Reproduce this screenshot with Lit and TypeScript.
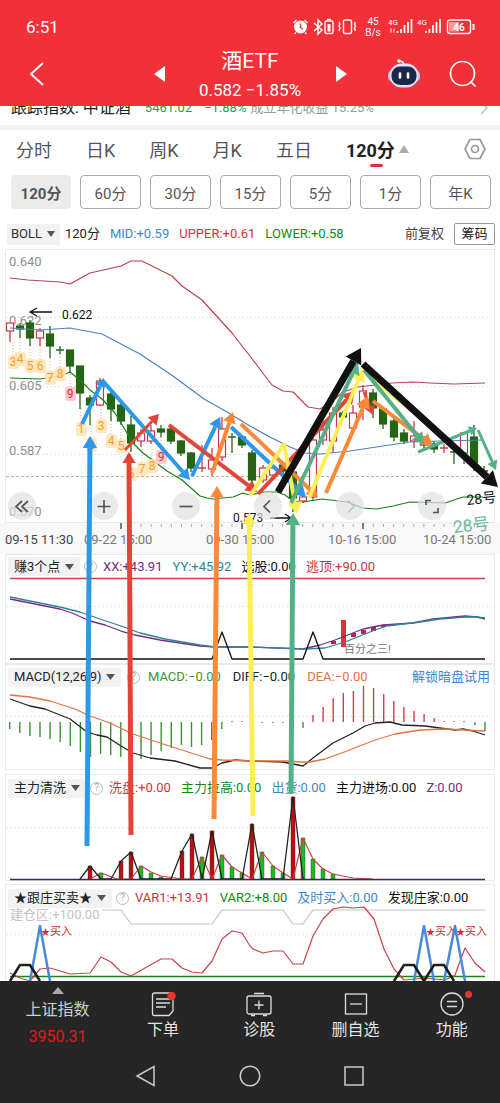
import { LitElement, html, svg, css } from "lit";
import { customElement } from "lit/decorators.js";

type P = [number, number];

/* x, high, low, body top, body bottom, rising */
const CANDLES: [number, number, number, number, number, number][] = [
  [10, 323, 342, 323, 331, 1], [20, 323, 338, 326, 329, 0], [30, 320, 346, 323, 338, 0],
  [40, 328, 346, 331, 338, 1], [50, 326, 358, 334, 346, 0], [60, 346, 354, 350, 350, 0],
  [70, 350, 373, 350, 366, 0], [80, 366, 409, 366, 393, 0], [90, 395, 425, 398, 405, 0],
  [100, 378, 406, 381, 405, 1], [111, 392, 421, 394, 409, 0], [121, 400, 425, 405, 421, 0],
  [131, 416, 452, 425, 443, 0], [141, 429, 447, 433, 441, 1], [151, 425, 444, 431, 441, 1],
  [161, 425, 437, 429, 432, 0], [171, 425, 444, 429, 441, 0], [181, 440, 456, 441, 453, 0],
  [191, 452, 472, 453, 468, 0], [202, 445, 472, 468, 468, 1], [212, 448, 476, 460, 469, 1],
  [222, 417, 461, 429, 457, 1], [232, 433, 453, 437, 437, 0], [242, 435, 448, 437, 445, 0],
  [252, 450, 484, 453, 480, 0], [263, 465, 483, 468, 480, 1], [273, 466, 477, 468, 475, 1],
  [283, 463, 474, 465, 471, 0], [293, 470, 512, 472, 498, 0], [303, 493, 503, 497, 501, 1],
  [313, 436, 500, 440, 497, 1], [323, 420, 445, 430, 440, 1], [333, 407, 452, 413, 441, 1],
  [343, 411, 418, 413, 417, 0], [353, 405, 430, 413, 428, 1], [363, 385, 420, 391, 407, 1],
  [373, 389, 418, 393, 408, 0], [383, 407, 429, 409, 424, 0], [394, 417, 441, 421, 437, 0],
  [404, 429, 444, 433, 441, 0], [414, 421, 448, 436, 441, 1], [424, 436, 449, 440, 445, 0],
  [434, 441, 453, 444, 449, 0], [444, 444, 453, 448, 448, 1], [454, 447, 464, 452, 452, 0],
  [464, 432, 464, 433, 453, 1], [474, 425, 471, 437, 463, 0], [484, 466, 474, 471, 471, 0],
];

/* sequence count badges under the candles */
const COUNTS: [number, number, string][] = [
  [13, 362, "3"], [20, 359, "4"], [30, 366, "5"], [40, 366, "6"], [50, 378, "7"], [60, 374, "8"],
  [70, 394, "9"], [81, 429, "1"], [91, 445, "2"], [101, 426, "3"], [111, 441, "4"], [121, 446, "5"],
  [131, 474, "6"], [142, 469, "7"], [152, 466, "8"], [161, 457, "9"],
];

const UPPER = "10,278 28,280 60,282 70,284 90,273 112,268 121,266 131,261 142,261 172,276 182,286 202,300 232,333 242,346 250,356 262,372 272,385 283,391 293,392 302,401 308,407 320,409 330,403 343,392 358,387 392,383 413,382 430,383 454,384 485,383";
const MID = "10,328 40,330 70,328 102,334 140,354 173,376 204,399 227,412 250,426 270,437 290,447 305,453 320,454 350,451 383,446 410,442 440,441 483,440";
const LOWER = "10,378 40,379 60,376 70,372 80,380 90,390 102,399 115,413 133,443 143,453 167,471 182,480 200,496 207,498 213,499 233,497 243,493 250,495 263,492 277,492 285,495 293,501 303,502 322,499 347,502 363,508 377,509 393,506 410,502 445,503 463,497 483,497";

const MACD_DOWN = [729, 733, 736, 737, 739, 742, 746, 752, 757, 754, 755, 757, 758, 759, 755, 751, 748, 745, 747, 745, 740, 729];
const MACD_UP = [715, 707, 698, 693, 691, 686, 688, 694, 701, 707, 711, 714, 718, 721];

const WASH_RED: P[] = [[90, 866], [121, 861], [131, 852], [182, 851], [192, 834], [212, 831], [252, 824], [293, 797]];
const WASH_GREEN: P[] = [[101, 873], [141, 866], [151, 873], [161, 877], [202, 857], [222, 855], [232, 867], [242, 873], [262, 852], [273, 866], [283, 873], [303, 838], [313, 859], [323, 869], [333, 874]];

/* hand-drawn arrows: x1, y1, x2, y2, colour, shaft width, head length */
const BLUE = "#2c98e8", RED = "#e24538", ORANGE = "#fb8937", YELLOW = "#fbef55", GREEN = "#54b086", INK = "#111";
const ARROWS: [number, number, number, number, string, number, number][] = [
  [82, 424, 104, 378, BLUE, 4, 9], [102, 380, 190, 480, BLUE, 4, 11], [192, 476, 220, 417, BLUE, 4, 11], [231, 427, 306, 497, BLUE, 4, 12],
  [125, 450, 159, 414, RED, 3, 10], [169, 425, 257, 492, RED, 4, 11], [258, 494, 355, 391, RED, 4, 12], [364, 392, 373, 415, RED, 3, 9],
  [212, 473, 233, 412, ORANGE, 4, 11], [241, 424, 318, 497, ORANGE, 4, 11], [326, 493, 368, 396, ORANGE, 4, 12], [373, 401, 433, 446, ORANGE, 4, 12],
  [250, 496, 285, 443, YELLOW, 4, 6], [284, 443, 297, 514, YELLOW, 4, 12], [309, 498, 363, 369, YELLOW, 4, 12], [366, 374, 444, 436, YELLOW, 4, 1],
  [291, 503, 358, 362, GREEN, 4, 12], [364, 370, 424, 444, GREEN, 4, 11], [418, 452, 477, 428, GREEN, 3, 8], [478, 430, 496, 470, GREEN, 3, 9],
  [278, 492, 361, 348, INK, 7, 15], [363, 364, 498, 487, INK, 7, 15],
  [87, 846, 90, 436, BLUE, 5, 12], [131, 835, 129, 452, RED, 5, 11], [214, 819, 217, 486, ORANGE, 5, 11],
  [253, 816, 249, 513, YELLOW, 5, 11], [291, 794, 293, 513, GREEN, 5, 12],
];

const arrow = ([x1, y1, x2, y2, c, w, h]: (typeof ARROWS)[number]) => {
  const d = Math.hypot(x2 - x1, y2 - y1);
  const ux = (x2 - x1) / d, uy = (y2 - y1) / d;
  const bx = x2 - ux * h, by = y2 - uy * h;
  const r = h < 3 ? w / 2 : h * 0.6;
  return svg`<g fill=${c} stroke=${c}>
    <line x1=${x1} y1=${y1} x2=${bx} y2=${by} stroke-width=${w}></line>
    <polygon stroke="none" points=${`${x2},${y2} ${bx - uy * r},${by + ux * r} ${bx + uy * r},${by - ux * r}`}></polygon>
  </g>`;
};

const line = (points: string, stroke: string, width = 1) =>
  svg`<polyline points=${points} fill="none" stroke=${stroke} stroke-width=${width} stroke-linejoin="round"></polyline>`;
const dash = (y: number) =>
  svg`<line x1="6" x2="494" y1=${y + 0.5} y2=${y + 0.5} stroke="#e6e6e6" stroke-dasharray="2 2"></line>`;

const candle = ([x, hi, lo, top, bot, up]: (typeof CANDLES)[number]) => {
  const c = up ? "#c8384a" : "#266416";
  if (top === bot)
    return svg`<path d=${`M${x} ${hi}V${lo}M${x - 4} ${top}h8`} stroke=${c} stroke-width="1.3" fill="none"></path>`;
  return svg`<path d=${`M${x} ${hi}V${top}M${x} ${bot}V${lo}`} stroke=${c} stroke-width="1.3"></path>
    <rect x=${x - 3.5} y=${top} width="7" height=${bot - top} fill=${up ? "#fff" : c} stroke=${c} stroke-width="1.2"></rect>`;
};

@customElement("study-panel")
export class StudyPanel extends LitElement {
  static properties = { name: {}, items: { attribute: false }, link: {} };
  declare name: string;
  declare items: [string, string][];
  declare link?: string;
  static styles = css`
    :host { display: block; margin: 0 5px; border: 1px solid #e9e9e9; background: #fff; }
    .head { display: flex; align-items: center; height: var(--head, 23px); padding: 0 4px 0 2px; font-size: 13px; line-height: 18px; white-space: nowrap; gap: var(--gap, 10px); }
    .chip { display: flex; align-items: center; gap: 4px; height: 19px; padding: 0 6px; background: #f2f2f2; border-radius: 2px; margin-right: -6px; }
    select { appearance: none; border: 0; padding: 0; margin: 0; background: none; font: inherit; color: #222; }
    .help { display: grid; place-items: center; width: 13px; height: 13px; box-sizing: border-box; border: 1px solid #bbb; border-radius: 50%; background: none; padding: 0; font: 10px/1 Roboto, sans-serif; color: #aaa; margin-right: -4px; }
    a { margin-left: auto; color: #3f86cc; text-decoration: none; }
  `;
  render() {
    return html`<div class="head">
        <span class="chip">
          <select aria-label="指标"><option>${this.name}</option></select>
          <svg width="9" height="6" viewBox="0 0 9 6" aria-hidden="true"><path d="M0 0h9L4.500 6z" fill="#555"></path></svg>
        </span>
        <button class="help" aria-label="说明">?</button>
        ${this.items.map(([t, c]) => html`<span style="color:${c}">${t}</span>`)}
        ${this.link ? html`<a href="#">${this.link}</a>` : ""}
      </div><slot></slot>`;
  }
}

@customElement("app-root")
export class AppRoot extends LitElement {
  static styles = css`
    :host { display: block; background: #fff; font-family: Roboto, "Noto Sans CJK SC", sans-serif; color: #222; overflow: hidden; }
    * { box-sizing: border-box; }
    button { font: inherit; color: inherit; background: none; border: 0; padding: 0; margin: 0; }
    svg { display: block; }
    header { background: #f23038; color: #fff; height: 106px; }
    .status { display: flex; justify-content: space-between; align-items: center; height: 52px; padding: 2px 24px 0 26px; font-size: 17px; }
    .bar { display: grid; grid-template-columns: 1fr auto 1fr; align-items: center; height: 54px; }
    .side { display: flex; align-items: center; justify-content: space-between; height: 54px; padding-bottom: 18px; }
    .side.left { padding-left: 29px; padding-right: 34px; }
    .side.right { padding-left: 35px; padding-right: 23px; }
    .tools { display: flex; align-items: center; gap: 29px; }
    .side > button, .tools { margin-top: 7px; }
    .name { text-align: center; height: 54px; }
    h1 { margin: -3px 0 0; font-size: 21px; line-height: 24px; font-weight: 400; }
    .quote { font-size: 17px; line-height: 20px; margin-top: 7px; white-space: nowrap; }
    .index { display: flex; align-items: center; height: 19px; overflow: hidden; padding: 0 12px 0 11px; white-space: nowrap; font-size: 13px; line-height: 18px; }
    .index > * { margin-top: -15px; }
    .index b { font-weight: 400; font-size: 16px; margin-right: 14px; }
    .index .g { color: #1f9d4d; margin-right: 12px; }
    .index .g + .g { margin-right: 4px; }
    .index .m { color: #999; }
    .index svg { margin-left: auto; }
    .tabs { display: flex; align-items: center; gap: 34px; height: 45px; border-top: 5px solid #f4f4f4; padding: 0 14px 3px 16px; font-size: 18px; color: #555; white-space: nowrap; margin-bottom: 5px; }
    .tabs .on { position: relative; display: flex; align-items: center; gap: 4px; font-weight: 700; color: #222; }
    .tabs .on::after { content: ""; position: absolute; left: 24px; bottom: -5px; width: 13px; height: 3px; border-radius: 2px; background: #d8323c; }
    .tabs .gear { margin-left: auto; }
    .periods { display: flex; gap: 9px; padding-left: 11px; overflow: hidden; }
    .periods button { flex: none; width: 61px; height: 34px; border: 1px solid #aaa; border-radius: 4px; font-size: 15px; color: #555; }
    .periods .on { width: 60px; background: #ebebeb; border-color: #ebebeb; font-weight: 700; }
    .boll { display: flex; align-items: center; gap: 10px; height: 40px; padding: 10px 5px 0 7px; font-size: 13px; line-height: 18px; white-space: nowrap; }
    .chip { display: flex; align-items: center; gap: 4px; height: 21px; padding: 0 5px 0 4px; background: #f2f2f2; border-radius: 2px; margin-right: -5px; }
    select { appearance: none; border: 0; padding: 0; margin: 0; background: none; font: inherit; color: #333; }
    .mid { color: #3f86cc; } .up { color: #d0333d; } .low { color: #128a12; }
    .adj { margin-left: auto; color: #444; }
    .chips { width: 41px; height: 22px; border: 1px solid #999; border-radius: 2px; }
    .stage { position: relative; }
    .price { position: relative; margin: 0 5px; border: 1px solid #e9e9e9; }
    .plot { width: 100%; height: auto; overflow: visible; }
    .axis { padding: 0 5px; background: #f8f8f8; }
    .ctl { position: absolute; left: 0; right: 0; bottom: 2px; display: flex; justify-content: space-between; padding: 0 48px 0 2px; }
    .ctl button { width: 28px; height: 28px; border-radius: 50%; background: rgba(225, 225, 225, 0.7); display: grid; place-items: center; }
    .ink { position: absolute; left: 0; top: 0; width: 100%; height: auto; pointer-events: none; }
    .tall { --head: 24px; --gap: 12px; }
    .low4 { --head: 26px; margin-top: 4px; }
    .low5 { --head: 26px; margin-top: 3px; border-bottom: 0; }
    footer { position: relative; background: #262626; color: #ddd; height: 122px; }
    .acts { display: grid; grid-template-columns: 115px repeat(4, 1fr); font-size: 16px; line-height: 18px; }
    .acts button { display: flex; flex-direction: column; align-items: center; padding-top: 10px; gap: 4px; color: #e4e4e4; height: 68px; justify-content: flex-start; }
    .acts svg { overflow: visible; }
    .acts .sh { gap: 0; padding-top: 6px; color: #ccc; }
    .sh span { margin-top: 7px; }
    .sh .v { color: #e01b1b; margin-top: 9px; }
    .nav { display: flex; justify-content: center; gap: 82px; padding-top: 16px; }
    text { font-family: Roboto, "Noto Sans CJK SC", sans-serif; }
  `;

  status() {
    return svg`<svg width="184" height="24" viewBox="292 15 184 24" fill="none" stroke="#fff" stroke-width="1.4" aria-label="状态">
      <circle cx="300.500" cy="27" r="6.500" fill="#fff" stroke="none"></circle>
      <path d="M293.500 23l3-3M304.500 20l3 3M296 32.500l-1.500 1.500M305 32.500l1.500 1.500"></path>
      <path d="M300.500 23.500v4l2.500 1.500" stroke="#f23038"></path>
      <path d="M314 23l8 7-4 4V20l4 4-8 7"></path>
      <rect x="325" y="21" width="8" height="12.500" rx="1.500"></rect><path d="M327 19.500h4"></path><rect x="327.500" y="24" width="3" height="7.500" fill="#fff" stroke="none"></rect>
      <rect x="343.500" y="20" width="8" height="13.500" rx="1.500"></rect><path d="M339 22l1 2-1 2 1 2-1 3M355.500 22l-1 2 1 2-1 2 1 3"></path>
      <g fill="#fff" stroke="none" text-anchor="middle"><text x="373" y="25" font-size="10">45</text><text x="373" y="36" font-size="10">B/s</text>
      <text x="393" y="25" font-size="8">4G</text><text x="422" y="25" font-size="8">4G</text></g>
      <g stroke-width="1.700"><path d="M397.500 33v-2M401 33v-4M404.500 33v-8M408 33v-11M411.500 33v-14M426 33v-2M429.500 33v-4M433 33v-8M436.500 33v-11M440 33v-14"></path></g>
      <path d="M391 28.500v4M394 28.500v4" stroke-width="1"></path>
      <rect x="447.500" y="20" width="23" height="13.500" rx="2.500"></rect><rect x="449" y="22" width="10" height="9.500" fill="#ff9a9a" stroke="none"></rect><path d="M473.500 24v6" stroke-width="2"></path>
      <text x="459" y="31" font-size="10" font-weight="700" text-anchor="middle" fill="#fff" stroke="none">46</text>
    </svg>`;
  }

  robot() {
    return svg`<svg width="32" height="32" viewBox="0 0 32 32" aria-hidden="true">
      <path d="M11 3.500q4-1 5 3" stroke="#fff" stroke-width="1.500" fill="none"></path><circle cx="11" cy="3" r="1.800" fill="#fff"></circle>
      <rect x="0" y="12" width="32" height="12" rx="5" fill="#b9bdf2"></rect>
      <rect x="1.500" y="5.500" width="29" height="24" rx="12" fill="#e6dcfb"></rect>
      <rect x="3.500" y="8.500" width="25" height="18.500" rx="8.500" fill="#1d2748"></rect>
      <path d="M12 15.500v4M20 15.500v4" stroke="#fff" stroke-width="2.600" stroke-linecap="round"></path>
    </svg>`;
  }

  price() {
    return svg`<svg class="plot" viewBox="6 250 488 272">
      ${[317, 386, 454].map(dash)}
      <g fill="#8f8f8f" font-size="13"><text x="9" y="266">0.640</text><text x="9" y="325">0.622</text><text x="9" y="390">0.605</text><text x="9" y="455">0.587</text><text x="9" y="516">0.570</text></g>
      <line x1="6" x2="490" y1="476.500" y2="476.500" stroke="#c8b48c" stroke-dasharray="3 2"></line>
      ${COUNTS.map(([x, y]) => svg`<line x1=${x} x2=${x} y1=${y - 20} y2=${y} stroke="#dcb774" stroke-dasharray="1 2"></line>`)}
      ${CANDLES.map(candle)}
      ${line(UPPER, "#b8434c", 1.2)}${line(MID, "#4a82bd", 1.2)}${line(LOWER, "#17801a", 1.2)}
      ${COUNTS.map(([x, y, n]) => svg`<rect x=${x - 5} y=${y - 7} width="11" height="14" rx="3" fill=${n === "9" ? "#ffc0c6" : "#ffe3b4"} fill-opacity="0.85"></rect>
        <text x=${x} y=${y + 4} font-size="12" text-anchor="middle" fill=${n === "9" ? "#cf2f42" : "#f0a030"}>${n}</text>`)}
      <g font-size="12" fill="#111"><text x="62" y="319">0.622</text><text x="233" y="522">0.573</text></g>
      <path d="M52 312H30m7-4l-7 4 7 4M270 518h21m-6-4l6 4-6 4" stroke="#111" stroke-width="1.300" fill="none"></path>
    </svg>`;
  }

  axis() {
    const ticks = Array.from({ length: 36 }, (_, i) => 131 + i * 10.1);
    const dates: [number, string, string][] = [[5, "09-15 11:30", "#444"], [84, "09-22 15:00", "#777"], [206, "09-30 15:00", "#777"], [328, "10-16 15:00", "#777"], [423, "10-24 15:00", "#777"]];
    return svg`<svg class="plot" viewBox="5 523 490 31">
      ${ticks.map((x) => svg`<line x1=${x} x2=${x} y1="524" y2="527" stroke="#aaa"></line>`)}
      ${[121, 242, 363].map((x) => svg`<line x1=${x} x2=${x} y1="523" y2="529" stroke="#555" stroke-width="1.500"></line>`)}
      ${dates.map(([x, t, c]) => svg`<text x=${x} y="544" font-size="13" fill=${c}>${t}</text>`)}
    </svg>`;
  }

  trend() {
    return svg`<svg class="plot" viewBox="6 578 488 85">
      ${dash(606)}
      ${line("10,578.5 485,578.5", "#cf3d47", 1.3)}
      ${[[333, 641, 3], [353, 633, 4], [363, 630, 4], [373, 627, 4], [383, 625, 2]].map(([x, y, h]) => svg`<rect x=${x - 2} y=${y} width="5" height=${h} fill="#c2204a"></rect>`)}
      <rect x="341" y="620" width="5" height="27" fill="#dc3136"></rect>
      ${line("10,599 60,609 72,613 90,621 105,625 121,631 135,635 160,640 200,646 215,647 250,647 303,649 320,645 335,640 363,629 383,625 413,623 433,619 465,616 477,617 485,619", "#7a2a82", 1.3)}
      ${line("10,597 60,607 80,612 100,619 121,626 140,633 165,639 200,645 215,647 250,647 305,649 325,648 345,642 375,630 387,626 420,622 440,619 465,617 477,617 485,618", "#2b8594", 1.3)}
      ${line("10,659 212,659 222,632 232,659 303,659 313,632 323,659 485,659", "#111", 1.3)}
      <text x="344" y="653" font-size="11" fill="#777">百分之三!</text>
    </svg>`;
  }

  macd() {
    const bar = (x: number, y: number, c: string) => svg`<line x1=${x} x2=${x} y1="722" y2=${y} stroke=${c} stroke-width="1.400"></line>`;
    return svg`<svg class="plot" viewBox="6 689 488 80">
      ${dash(716)}
      ${MACD_DOWN.map((y, i) => bar(9.7 + i * 10.1, y, "#3c9232"))}
      ${MACD_UP.map((y, i) => bar(313 + i * 10.1, y, "#c9424d"))}
      ${bar(303, 728, "#3c9232")}${bar(475, 725, "#3c9232")}${bar(485, 731, "#3c9232")}
      ${[232, 242, 454, 464].map((x) => bar(x, 721, "#c9424d"))}${[262, 273, 283].map((x) => bar(x, 723, "#3c9232"))}
      ${line("10,699 30,706 45,709 70,719 87,732 97,735 107,737 121,746 133,753 150,758 175,761 200,768 212,768 222,763 235,760 250,761 283,762 293,764 303,766 313,758 333,743 353,733 365,726 375,723 390,722 402,725 425,726 455,730 463,729 473,731 485,735", "#222", 1.3)}
      ${line("10,695 30,697 50,701 75,709 90,716 110,723 133,734 160,743 185,751 210,759 222,760 250,761 287,761 300,762 310,762 325,759 347,751 375,740 395,734 420,730 445,729 485,731", "#e2743f", 1.3)}
    </svg>`;
  }

  wash() {
    const bars = (a: P[], c: string) => a.map(([x, y]) => svg`<rect x=${x - 2} y=${y} width="4" height=${879 - y} fill=${c} stroke="#333" stroke-width="0.400"></rect>`);
    return svg`<svg class="plot" viewBox="6 801 488 79">
      ${dash(827)}
      ${bars(WASH_RED, "#c00d12")}${bars(WASH_GREEN, "#18c01c")}
      ${line("90,879 101,873 117,879 131,879 141,866 151,872 161,876 182,879 192,879 202,857 212,879 222,855 232,867 242,873 252,879 262,852 273,866 283,873 293,879 303,838 313,859 323,869 333,874 353,878 373,879", "#d0403f", 1.2)}
      ${line("80,879 90,866 101,879 111,879 121,861 131,852 141,879 171,879 182,851 192,834 202,879 212,831 222,879 242,879 252,824 262,879 283,879 293,797 303,879", "#222", 1.3)}
      ${line("10,879.5 485,879.5", "#4d2153", 1.4)}
    </svg>`;
  }

  follow() {
    const buy: P[] = [[42, 935], [427, 935], [457, 935]];
    return svg`<svg class="plot" viewBox="6 911 488 70">
      ${dash(934)}
      ${line("102,910 121,910 131,924 212,924 222,910 283,910 293,924 303,924 313,910 485,910", "#c4c4c4", 1.2)}
      <text x="10" y="919" font-size="13" fill="#c2c2c2">建仓区:+100.00</text>
      ${line("10,976.5 485,976.5", "#108a10", 1.3)}
      ${line("10,973 20,978 30,981 40,969 50,968 70,974 90,973 101,957 111,962 121,972 131,976 161,959 172,959 182,968 192,972 202,973 212,961 222,939 232,931 242,933 250,946 253,949 263,953 273,951 283,951 293,964 303,964 313,936 323,919 333,909 343,907 353,908 364,907 374,919 384,949 394,969 404,980 425,978 445,980 455,975 465,948 475,963 485,972", "#c8434a", 1.2)}
      ${buy.map(([x, y]) => svg`<text x=${x - 1} y=${y} font-size="11" fill="#cf2d35"><tspan font-size="9">★</tspan>买入</text>`)}
      ${["30,981 40,926 50,981", "414,981 424,926 434,981", "444,981 455,926 465,981"].map((p) => line(p, "#4788dc", 2.5))}
      ${["10,981 20,965 30,965 40,981", "394,981 404,965 414,965 424,981 434,965 444,965 454,981"].map((p) => line(p, "#1c1c1c", 2.5))}
    </svg>`;
  }

  ink() {
    return svg`<svg class="ink" viewBox="0 249 500 732" aria-hidden="true">
      ${ARROWS.map(arrow)}
      <text x="467" y="505" font-size="14" fill="#111" transform="rotate(-6 467 505)">28号</text>
      <text x="454" y="533" font-size="17" fill="#6cba98" transform="rotate(-6 454 533)">28号</text>
    </svg>`;
  }

  icon(d: unknown) {
    return svg`<svg width="26" height="26" viewBox="0 0 26 26" fill="none" stroke="#ddd" stroke-width="1.300" aria-hidden="true">${d}</svg>`;
  }

  render() {
    const ctl: [string, string, string][] = [
      ["最早", "M15 4L9 9.500l6 5.500M9 4L3 9.500 9 15", "#555"], ["放大", "M9 3v13M2.500 9.500h13", "#555"], ["缩小", "M2.500 9.500h13", "#555"],
      ["向左", "M11 3.500l-6 6 6 6", "#555"], ["向右", "M7 3.500l6 6-6 6", "#c4c4c4"], ["全屏", "M8 3.500H3V8M10 15.500h5V11", "#555"],
    ];
    return html`
      <header>
        <div class="status"><span>6:51</span>${this.status()}</div>
        <div class="bar">
          <div class="side left">
            <button aria-label="返回"><svg width="16" height="26" viewBox="0 0 16 26"><path d="M14 2L2 13l12 11" fill="none" stroke="#fff" stroke-width="2"></path></svg></button>
            <button aria-label="上一个"><svg width="11" height="16" viewBox="0 0 11 16"><path d="M11 0v16L0 8z" fill="#fff"></path></svg></button>
          </div>
          <div class="name"><h1>酒ETF</h1><div class="quote">0.582 −1.85%</div></div>
          <div class="side right">
            <button aria-label="下一个"><svg width="11" height="16" viewBox="0 0 11 16"><path d="M0 0v16l11-8z" fill="#fff"></path></svg></button>
            <span class="tools">
              <button aria-label="助手">${this.robot()}</button>
              <button aria-label="搜索"><svg width="28" height="28" viewBox="0 0 28 28" fill="none" stroke="#fff" stroke-width="1.700"><circle cx="13.500" cy="13.500" r="12"></circle><path d="M21.500 21.500l5 5"></path></svg></button>
            </span>
          </div>
        </div>
      </header>
      <div class="index"><b>跟踪指数: 中证酒</b><span class="g">5461.02</span><span class="g">−1.88%</span><span class="m">成立年化收益 15.25%</span>
        <svg width="8" height="14" viewBox="0 0 8 14"><path d="M1 1l6 6-6 6" fill="none" stroke="#bbb" stroke-width="1.300"></path></svg></div>
      <nav class="tabs">
        ${["分时", "日K", "周K", "月K", "五日"].map((t) => html`<button>${t}</button>`)}
        <button class="on">120分<svg width="10" height="8" viewBox="0 0 10 8"><path d="M5 0l5 8H0z" fill="#aaa"></path></svg></button>
        <button class="gear" aria-label="设置"><svg width="22" height="22" viewBox="0 0 22 22" fill="none" stroke="#999" stroke-width="1.700"><path d="M6 1.500h10L21 11l-5 9.500H6L1 11z" stroke-linejoin="round"></path><circle cx="11" cy="11" r="3.500"></circle></svg></button>
      </nav>
      <div class="periods">${["120分", "60分", "30分", "15分", "5分", "1分", "年K", ""].map((t, i) => html`<button class=${i ? "" : "on"}>${t}</button>`)}</div>
      <div class="boll">
        <span class="chip"><select aria-label="主图指标"><option>BOLL</option></select><svg width="8" height="6" viewBox="0 0 8 6"><path d="M0 0h8L4 6z" fill="#555"></path></svg></span>
        <span>120分</span><span class="mid">MID:+0.59</span><span class="up">UPPER:+0.61</span><span class="low">LOWER:+0.58</span>
        <span class="adj">前复权</span><button class="chips">筹码</button>
      </div>
      <main class="stage">
        <div class="price">${this.price()}
          <div class="ctl">${ctl.map(([n, d, c]) => html`<button aria-label=${n}><svg width="18" height="19" viewBox="0 0 18 19"><path d=${d} fill="none" stroke=${c} stroke-width="1.700"></path></svg></button>`)}</div>
        </div>
        <div class="axis">${this.axis()}</div>
        <study-panel name="赚3个点" .items=${[["XX:+43.91", "#7a2a82"], ["YY:+45.92", "#2b8594"], ["选股:0.00", "#111"], ["逃顶:+90.00", "#cf3340"]]}>${this.trend()}</study-panel>
        <study-panel class="tall" name="MACD(12,26,9)" link="解锁暗盘试用" .items=${[["MACD:−0.00", "#3c9232"], ["DIFF:−0.00", "#222"], ["DEA:−0.00", "#e2743f"]]}>${this.macd()}</study-panel>
        <study-panel class="low4" name="主力清洗" .items=${[["洗盘:+0.00", "#cf3340"], ["主力拉高:0.00", "#128a12"], ["出货:0.00", "#3f86cc"], ["主力进场:0.00", "#111"], ["Z:0.00", "#7a2a82"]]}>${this.wash()}</study-panel>
        <study-panel class="low5" name="★跟庄买卖★" .items=${[["VAR1:+13.91", "#cf3340"], ["VAR2:+8.00", "#128a12"], ["及时买入:0.00", "#3f86cc"], ["发现庄家:0.00", "#111"]]}>${this.follow()}</study-panel>
        ${this.ink()}
      </main>
      <footer>
        <div class="acts">
          <button class="sh"><svg width="12" height="7" viewBox="0 0 12 7"><path d="M6 0l6 7H0z" fill="#aaa"></path></svg><span>上证指数</span><span class="v">3950.31</span></button>
          <button>${this.icon(svg`<path d="M4.500 2h17a1.500 1.500 0 0 1 1.500 1.500V20l-4 4.500H4A1.500 1.500 0 0 1 2.500 23V4q0-2 2-2M6 8h14M6 12h14M6 16h10"></path><circle cx="21.500" cy="5" r="4.200" fill="#e8352e" stroke="none"></circle>`)}<span>下单</span></button>
          <button>${this.icon(svg`<rect x="1" y="5" width="24" height="18" rx="2"></rect><path d="M8 2.500h10M13 9.500v9M8.500 14h9M5 24.500h4M17 24.500h4"></path>`)}<span>诊股</span></button>
          <button>${this.icon(svg`<rect x="2.500" y="3" width="21" height="20"></rect><path d="M7 13h12"></path>`)}<span>删自选</span></button>
          <button>${this.icon(svg`<circle cx="13" cy="13" r="11"></circle><path d="M8 10.500h10M8 15.500h10"></path><circle cx="29.500" cy="3.500" r="3.500" fill="#e8352e" stroke="none"></circle>`)}<span>功能</span></button>
        </div>
        <div class="nav">
          <button aria-label="返回"><svg width="22" height="22" viewBox="0 0 22 22" fill="none" stroke="#ccc" stroke-width="1.500"><path d="M19 1.500v19L2 11z"></path></svg></button>
          <button aria-label="主页"><svg width="22" height="22" viewBox="0 0 22 22" fill="none" stroke="#ccc" stroke-width="1.500"><circle cx="11" cy="11" r="9.800"></circle></svg></button>
          <button aria-label="最近"><svg width="22" height="22" viewBox="0 0 22 22" fill="none" stroke="#ccc" stroke-width="1.500"><rect x="2" y="2" width="18" height="18"></rect></svg></button>
        </div>
      </footer>`;
  }
}
